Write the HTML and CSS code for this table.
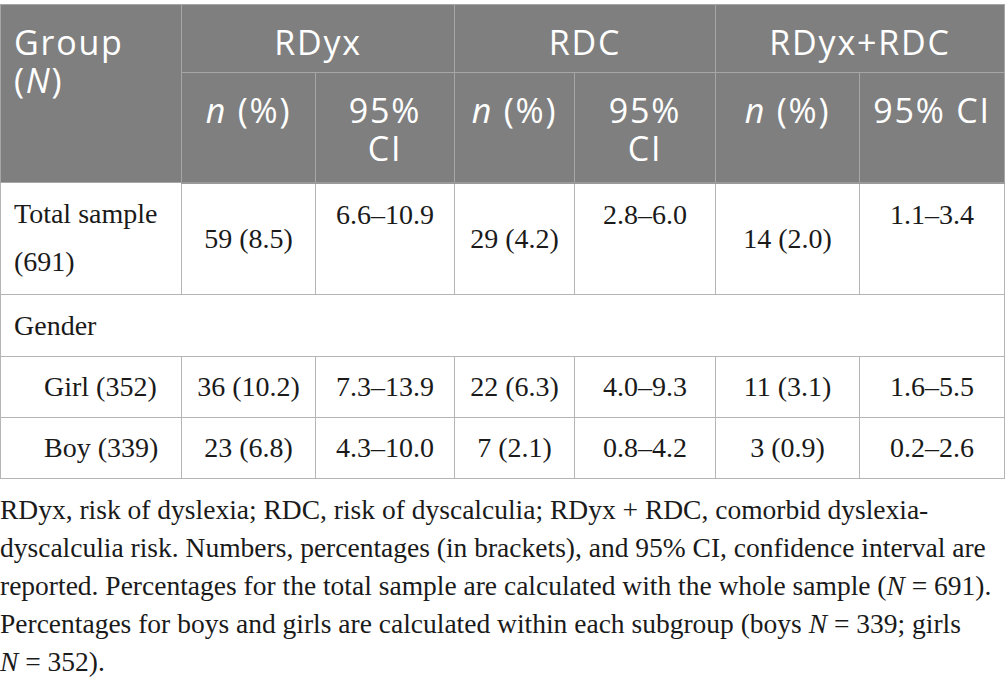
FILE: index.html
```html
<!DOCTYPE html>
<html lang="en">
<head>
<meta charset="utf-8">
<title>Table</title>
<link rel="stylesheet" href="styles.css">
</head>
<body>
<div class="page">
  <table class="data">
    <colgroup>
      <col class="c-group"><col class="c1"><col class="c2"><col class="c3"><col class="c4"><col class="c5"><col class="c6">
    </colgroup>
    <thead>
      <tr class="h1">
        <th rowspan="2" class="h-group">Group (<i>N</i>)</th>
        <th colspan="2">RDyx</th>
        <th colspan="2">RDC</th>
        <th colspan="2">RDyx+RDC</th>
      </tr>
      <tr class="h2">
        <th><i>n</i> (%)</th>
        <th>95% CI</th>
        <th><i>n</i> (%)</th>
        <th>95% CI</th>
        <th><i>n</i> (%)</th>
        <th>95% CI</th>
      </tr>
    </thead>
    <tbody>
      <tr class="r-total">
        <td class="lbl top">Total sample (691)</td>
        <td class="mid">59 (8.5)</td>
        <td class="top">6.6–10.9</td>
        <td class="mid">29 (4.2)</td>
        <td class="top">2.8–6.0</td>
        <td class="mid">14 (2.0)</td>
        <td class="top">1.1–3.4</td>
      </tr>
      <tr class="r-gender">
        <td class="lbl" colspan="7">Gender</td>
      </tr>
      <tr class="r-single">
        <td class="lbl sub">Girl (352)</td>
        <td>36 (10.2)</td>
        <td>7.3–13.9</td>
        <td>22 (6.3)</td>
        <td>4.0–9.3</td>
        <td>11 (3.1)</td>
        <td>1.6–5.5</td>
      </tr>
      <tr class="r-single">
        <td class="lbl sub">Boy (339)</td>
        <td>23 (6.8)</td>
        <td>4.3–10.0</td>
        <td>7 (2.1)</td>
        <td>0.8–4.2</td>
        <td>3 (0.9)</td>
        <td>0.2–2.6</td>
      </tr>
    </tbody>
  </table>
  <p class="note">RDyx, risk of dyslexia; RDC, risk of dyscalculia; RDyx + RDC, comorbid dyslexia-dyscalculia risk. Numbers, percentages (in brackets), and 95% CI, confidence interval are reported. Percentages for the total sample are calculated with the whole sample (<i>N</i>&nbsp;=&nbsp;691). Percentages for boys and girls are calculated within each subgroup (boys <i>N</i>&nbsp;=&nbsp;339; girls <span class="nw"><i>N</i>&nbsp;=&nbsp;352).</span></p>
</div>
</body>
</html>
```

FILE: styles.css
```css
html, body {
  margin: 0;
  padding: 0;
  background: #ffffff;
}

.page {
  width: 1005px;
  padding-top: 4px;
}

.data {
  width: 1005px;
  table-layout: fixed;
  border-collapse: collapse;
  border: 1px solid #b5b5b5;
}

.c-group { width: 181px; }
.c1 { width: 134px; }
.c2 { width: 139px; }
.c3 { width: 120px; }
.c4 { width: 141px; }
.c5 { width: 144px; }
.c6 { width: 145px; }

.data th {
  background: #7f7f7f;
  color: #ffffff;
  font-family: "Open Sans", "DejaVu Sans", sans-serif;
  font-weight: 400;
  font-size: 34px;
  letter-spacing: 1.8px;
  line-height: 38px;
  text-align: center;
  vertical-align: top;
  padding: 18px 13px 0;
  border: 1px solid #a6a6a6;
}

.data th i {
  font-style: italic;
}

.data th.h-group {
  text-align: left;
  padding-left: 13px;
}

.data tr.h1 th {
  height: 68px;
  box-sizing: border-box;
}

.data tr.h2 th {
  height: 110px;
  box-sizing: border-box;
  border-bottom: 2px solid #9a9a9a;
}

.data td {
  font-family: "Liberation Serif", "Times New Roman", serif;
  font-size: 28px;
  line-height: 48px;
  color: #1a1a1a;
  text-align: center;
  vertical-align: middle;
  padding: 0 6px;
  border: 1px solid #b5b5b5;
}

.data td.lbl {
  text-align: left;
  padding-left: 13px;
}

.data td.sub {
  padding-left: 43px;
}

.data td.top {
  vertical-align: top;
  padding-top: 7px;
}

.data td.mid {
  vertical-align: middle;
}

.data tr.r-total td {
  height: 112px;
  box-sizing: border-box;
}

.data tr.r-gender td {
  height: 62px;
  box-sizing: border-box;
}

.data tr.r-single td {
  height: 61px;
  box-sizing: border-box;
}

.note {
  margin: 12px 0 0;
  font-family: "Liberation Serif", "Times New Roman", serif;
  font-size: 27.5px;
  line-height: 38px;
  color: #1a1a1a;
}

.nw {
  white-space: nowrap;
}
```
